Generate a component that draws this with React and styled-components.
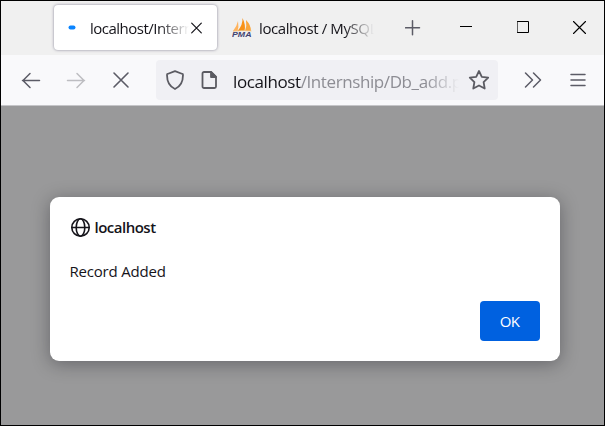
import React from "react";
import styled, { createGlobalStyle } from "styled-components";

const GlobalStyle = createGlobalStyle`
  * { box-sizing: border-box; }
  body { margin: 0; font-family: "Open Sans", "Noto Sans", sans-serif; color: #15141a; }
  button { font: inherit; border: 0; padding: 0; background: none; }
  svg { display: block; flex: none; }
`;

const Window = styled.main`
  width: 605px;
  height: 426px;
  border: 1px solid #000;
  display: flex;
  flex-direction: column;
  overflow: hidden;
  background: #99999a;
`;

const TabStrip = styled.header`
  height: 54px;
  flex: none;
  display: flex;
  align-items: flex-start;
  padding: 4px 0 0 53px;
  background: #f0f0f0;
`;

const Tab = styled.div`
  width: ${(p) => (p.$active ? 163 : 175)}px;
  height: 45px;
  flex: none;
  display: flex;
  align-items: center;
  padding-left: ${(p) => (p.$active ? 14 : 15)}px;
  border-radius: 4px;
  background: ${(p) => (p.$active ? "#fff" : "transparent")};
  box-shadow: ${(p) => (p.$active ? "0 0 3px rgba(80, 76, 105, 0.65)" : "none")};
`;

const TabTitle = styled.span`
  width: ${(p) => p.$width}px;
  margin-left: ${(p) => p.$gap}px;
  overflow: hidden;
  white-space: nowrap;
  font-size: 15px;
  line-height: 24px;
  letter-spacing: ${(p) => p.$tracking}px;
  color: #15141a;
  mask-image: linear-gradient(to left, transparent, #000 30px);
`;

const IconButton = styled.button`
  width: ${(p) => p.$width}px;
  height: ${(p) => p.$height || 45}px;
  flex: none;
  display: flex;
  align-items: center;
  justify-content: center;
  color: ${(p) => p.$color || "#5b5b66"};
`;

const WindowControls = styled.div`
  display: flex;
  margin-left: 15px;
`;

const Toolbar = styled.nav`
  height: 51px;
  flex: none;
  display: flex;
  align-items: center;
  padding-left: 7px;
  background: #f9f9fb;
  border-bottom: 1px solid #c5c5c8;
`;

const AddressBar = styled.div`
  width: 342px;
  height: 40px;
  flex: none;
  display: flex;
  align-items: center;
  margin-left: 13px;
  padding: 0 8px 0 9px;
  border-radius: 4px;
  background: #f0f0f4;
  color: #5b5b62;
`;

const Url = styled.div`
  width: 227px;
  margin: 3px 9px 0 0;
  overflow: hidden;
  white-space: nowrap;
  font-size: 17px;
  line-height: 26px;
  letter-spacing: -0.4px;
  color: #8d8d94;
  mask-image: linear-gradient(to left, transparent, #000 34px);
`;

const Host = styled.span`
  color: #15141a;
`;

const Page = styled.section`
  flex: 1;
  display: flex;
  justify-content: center;
  align-items: flex-start;
  padding: 91px 1px 0 5px;
`;

const Dialog = styled.div`
  width: 510px;
  height: 164px;
  flex: none;
  display: flex;
  flex-direction: column;
  padding: 20px;
  border-radius: 9px;
  background: #fff;
  box-shadow: 0 3px 18px rgba(20, 20, 28, 0.38);
`;

const Origin = styled.div`
  height: 21px;
  display: flex;
  align-items: center;
  gap: 4px;
  font-size: 15px;
  font-weight: 600;
  letter-spacing: -0.5px;
`;

const OriginName = styled.span`
  padding-bottom: 2px;
`;

const Message = styled.p`
  margin: 22px 0 0;
  height: 22px;
  font-size: 15px;
  line-height: 22px;
  letter-spacing: -0.2px;
`;

const Actions = styled.div`
  display: flex;
  justify-content: flex-end;
  margin-top: 19px;
`;

const OkButton = styled.button`
  && {
    width: 60px;
    height: 40px;
    border-radius: 4px;
    background: #0061e0;
    color: #fff;
    font-size: 15px;
    padding-bottom: 1px;
    letter-spacing: -0.7px;
  }
`;

function Icon({ w = 20, h = 20, stroke = 1.6, children }) {
  return (
    <svg width={w} height={h} viewBox={`0 0 ${w} ${h}`} fill="none" stroke="currentColor"
      strokeWidth={stroke} strokeLinecap="round" strokeLinejoin="round">
      {children}
    </svg>
  );
}

function PmaLogo() {
  return (
    <svg width="20" height="20" viewBox="0 0 20 20">
      <path d="M1 13 Q5 8 6 3 Q7 9 5.5 13Z" fill="#ffb35d" />
      <path d="M5.5 13 Q11 7 10.5 0 Q14 7 12.5 13Z" fill="#f99217" />
      <path d="M13 13 Q15 8 14 2 Q19 7 19 13Z" fill="#f9a63c" />
      <path d="M1 13.4 Q10 11.8 19.5 13" stroke="#eac593" strokeWidth=".8" fill="none" />
      <text x="0" y="19.4" fontFamily="Liberation Sans" fontSize="7.6" fontWeight="700"
        fontStyle="italic" fill="#414271" textLength="19.5" lengthAdjust="spacingAndGlyphs">PMA</text>
    </svg>
  );
}

export default function App() {
  return (
    <>
      <GlobalStyle />
      <Window>
        <TabStrip>
          <Tab $active>
            <svg width="8" height="5" viewBox="0 0 8 5"><rect x=".5" y=".5" width="7" height="4" rx="2" fill="#0a84ff" /></svg>
            <TabTitle $width={99} $gap={14} $tracking={-0.5}>localhost/Intern</TabTitle>
            <IconButton $width={16} $color="#15141a">
              <Icon w={12} h={12} stroke={1.2}><path d="M.7 1.2 10.3 10.8M10.3 1.2 .7 10.8" /></Icon>
            </IconButton>
          </Tab>
          <Tab>
            <PmaLogo />
            <TabTitle $width={115} $gap={7} $tracking={-0.4}>localhost / MySQL</TabTitle>
          </Tab>
          <IconButton $width={42}>
            <Icon w={16} h={16} stroke={1.5}><path d="M7.5 .8v14M.5 7.8h14" /></Icon>
          </IconButton>
          <WindowControls>
            <IconButton $width={34} $height={44} $color="#000">
              <Icon w={12} h={12} stroke={1}><path d="M0 5.5h12" strokeLinecap="butt" /></Icon>
            </IconButton>
            <IconButton $width={80} $height={44} $color="#000">
              <Icon w={12} h={12} stroke={1}><path d="M.5.5h11v11H.5z" strokeLinejoin="miter" /></Icon>
            </IconButton>
            <IconButton $width={33} $height={44} $color="#000">
              <Icon w={13} h={13} stroke={1.1}><path d="m.5.5 12 12m0-12-12 12" /></Icon>
            </IconButton>
          </WindowControls>
        </TabStrip>
        <Toolbar>
          <IconButton $width={45}>
            <Icon stroke={1.5}><path d="M18.5 10.5h-17M9 3.5l-7 7 7 7" /></Icon>
          </IconButton>
          <IconButton $width={45} $color="#bdbdc1">
            <Icon stroke={1.5}><path d="M1.5 10.5h17M11 3.5l7 7-7 7" /></Icon>
          </IconButton>
          <IconButton $width={45}>
            <Icon stroke={1.6}><path d="m3 3 14 14M17 3 3 17" /></Icon>
          </IconButton>
          <AddressBar>
            <Icon stroke={1.8}><path d="M10 1.2 17.5 4Q18 4 18 5C18 12 14.5 17 10 19 5.5 17 2 12 2 5Q2 4 2.5 4Z" /></Icon>
            <IconButton $width={48} $height={40} $color="#5b5b62">
              <Icon w={17} stroke={1.8}>
                <path d="M3 2H10l5 5v9.5a1.5 1.5 0 0 1-1.5 1.5H3A1.500 1.500 0 0 1 1.500 16.500v-13A1.500 1.500 0 0 1 3 2" />
                <path d="M10 2v5h5z" fill="currentColor" />
              </Icon>
            </IconButton>
            <Url><Host>localhost</Host>/Internship/Db_add.p</Url>
            <Icon w={22} h={22} stroke={1.8}>
              <path d="m11 2 2.8 5.8 6.4.9-4.6 4.5 1.1 6.3-5.7-3-5.7 3 1.1-6.3L1.8 8.700l6.400-.9Z" />
            </Icon>
          </AddressBar>
          <IconButton $width={69}>
            <Icon stroke={1.5}><path d="m2.5 3 7 7-7 7M10.5 3l7 7-7 7" /></Icon>
          </IconButton>
          <IconButton $width={22}>
            <Icon w={16} stroke={1.5}><path d="M1 4.500h14M1 10h14M1 15.500h14" /></Icon>
          </IconButton>
        </Toolbar>
        <Page>
          <Dialog role="dialog">
            <Origin>
              <Icon w={21} h={21} stroke={1.6}>
                <circle cx="10.5" cy="10.5" r="8.7" />
                <ellipse cx="10.5" cy="10.5" rx="4.3" ry="8.7" />
                <path d="M2 10.5h17" />
              </Icon>
              <OriginName>localhost</OriginName>
            </Origin>
            <Message>Record Added</Message>
            <Actions><OkButton>OK</OkButton></Actions>
          </Dialog>
        </Page>
      </Window>
    </>
  );
}
